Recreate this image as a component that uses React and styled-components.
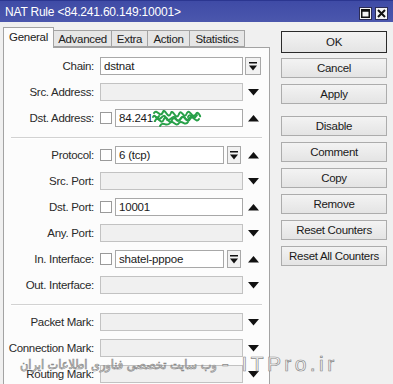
import React from "react";
import styled, { createGlobalStyle, css } from "styled-components";

const GlobalStyle = createGlobalStyle`
  html, body { margin: 0; padding: 0; background: #f0f0f0; }
  body { font-family: "Liberation Sans", Arial, sans-serif; }
  * { box-sizing: border-box; }
`;

const Window = styled.div`
  position: relative;
  width: 393px;
  height: 384px;
  overflow: hidden;
  background: #f0f0f0;
`;

const TitleBar = styled.div`
  height: 22px;
  background: linear-gradient(#3f4ba6, #4b57ad);
  border-top: 1px solid #2b3690;
  display: flex;
  align-items: center;
  justify-content: space-between;
  padding: 0 5px 0 5px;
  color: #fff;
  font-size: 12px;
  letter-spacing: -0.2px;
`;

const TitleButtons = styled.div`
  display: flex;
  gap: 3px;
  margin-top: 4px;
`;

const TitleBtn = styled.div`
  width: 13px;
  height: 13px;
  background: #f4f4f4;
  border: 1px solid #2c2c55;
  display: flex;
  align-items: center;
  justify-content: center;
`;

const Main = styled.div`
  display: flex;
  align-items: flex-start;
`;

const LeftCol = styled.div`
  margin-left: 3px;
  width: 267px;
  display: flex;
  flex-direction: column;
`;

const TabRow = styled.div`
  display: flex;
  align-items: flex-end;
  height: 25px;
  position: relative;
  z-index: 1;
`;

const Tab = styled.div`
  width: ${(p) => p.$w}px;
  height: ${(p) => (p.$active ? 21 : 17)}px;
  margin-bottom: ${(p) => (p.$active ? -1 : 0)}px;
  border: 1px solid #a3a3a3;
  border-bottom: ${(p) => (p.$active ? "none" : "1px solid #a3a3a3")};
  border-left: ${(p) => (p.$first ? "1px solid #a3a3a3" : "none")};
  background: ${(p) => (p.$active ? "#fcfcfc" : "#e6e6e6")};
  font-size: 11.5px;
  letter-spacing: -0.3px;
  color: #222;
  display: flex;
  align-items: center;
  justify-content: center;
  padding-bottom: ${(p) => (p.$active ? 2 : 0)}px;
  ${(p) =>
    p.$active &&
    css`
      border-right: 1px solid #a3a3a3;
    `}
`;

const Panel = styled.div`
  border: 1px solid #a3a3a3;
  border-bottom: none;
  background: #fcfcfc;
  height: 340px;
  padding-top: 9px;
`;

const Group = styled.div`
  display: flex;
  flex-direction: column;
  gap: 8px;
`;

const Separator = styled.div`
  margin: 10px 7px 7px 7px;
  height: 2px;
  border-top: 1px solid #d2d2d2;
  border-bottom: 1px solid #ffffff;
`;

const Row = styled.div`
  display: flex;
  align-items: center;
  height: 18px;
`;

const Label = styled.div`
  width: 90px;
  margin-right: 6px;
  text-align: right;
  font-size: 11.5px;
  letter-spacing: -0.3px;
  color: #2a2a2a;
  white-space: nowrap;
`;

const Field = styled.div`
  width: 143px;
  height: 18px;
  display: flex;
  align-items: center;
`;

const Check = styled.div`
  width: 12px;
  height: 12px;
  border: 1px solid #9a9a9a;
  background: #fff;
  margin-right: 3px;
  flex: none;
`;

const Input = styled.div`
  position: relative;
  flex: 1;
  height: 18px;
  border: 1px solid ${(p) => (p.$disabled ? "#c2c2c2" : "#a8a8a8")};
  background: ${(p) => (p.$disabled ? "#f0f0f0" : "#ffffff")};
  font-size: 11.5px;
  letter-spacing: -0.2px;
  color: #1a1a1a;
  padding-left: 3px;
  display: flex;
  align-items: center;
  white-space: nowrap;
`;

const DropBtn = styled.div`
  width: ${(p) => (p.$inner ? 14 : 16)}px;
  height: 18px;
  margin: ${(p) => (p.$inner ? "0 2px 0 3px" : "0")};
  border: 1px solid #a8a8a8;
  background: #f2f2f2;
  display: flex;
  align-items: center;
  justify-content: center;
  flex: none;
`;

const Trailing = styled.div`
  width: 16px;
  margin-left: 2px;
  height: 18px;
  display: flex;
  align-items: center;
  justify-content: center;
`;

const RightCol = styled.div`
  margin-left: 11px;
  width: 106px;
  padding-top: 9px;
  display: flex;
  flex-direction: column;
`;

const Button = styled.div`
  height: ${(p) => (p.$default ? 22 : 20)}px;
  margin-top: ${(p) => p.$mt || 0}px;
  border: 1px solid ${(p) => (p.$default ? "#2a2a2a" : "#acacac")};
  background: linear-gradient(#f3f3f3, #e4e4e4);
  font-size: 11.5px;
  letter-spacing: -0.3px;
  color: #1a1a1a;
  display: flex;
  align-items: center;
  justify-content: center;
  white-space: nowrap;
`;

const Watermark = styled.div`
  position: absolute;
  left: 20px;
  top: 350px;
  direction: ltr;
  display: flex;
  align-items: baseline;
  white-space: nowrap;
  pointer-events: none;
  color: rgba(255, 255, 255, 0.6);
  -webkit-text-stroke: 0.7px #8a8a8a;
`;

const WmArabic = styled.span`
  font-family: "DejaVu Sans Condensed", "DejaVu Sans", sans-serif;
  font-size: 12.6px;
`;

const WmLatin = styled.span`
  font-family: "Liberation Sans", Arial, sans-serif;
  font-size: 21px;
  letter-spacing: 3.4px;
  margin-left: 5px;
  position: relative;
  top: 2px;
`;

const Scribble = styled.svg`
  position: absolute;
  left: 36px;
  top: -3px;
`;

const DropIcon = () => (
  <svg width="8" height="9" viewBox="0 0 8 9">
    <rect x="0" y="0" width="8" height="1.5" fill="#111" />
    <path d="M0 3.5 H8 L4 8.5 Z" fill="#111" />
  </svg>
);

const Down = () => (
  <svg width="11" height="7" viewBox="0 0 11 7">
    <path d="M0 0 H11 L5.5 6.5 Z" fill="#111" />
  </svg>
);

const Up = () => (
  <svg width="11" height="7" viewBox="0 0 11 7">
    <path d="M0 6.5 H11 L5.5 0 Z" fill="#111" />
  </svg>
);

const GreenScribble = () => (
  <Scribble width="50" height="22" viewBox="0 0 50 22">
    <g fill="none" stroke="#27a048" strokeWidth="2" strokeLinecap="round">
      <path d="M2 6 C5 1 8 12 11 5 C13 0 16 14 19 6 C21 1 24 15 27 7 C30 1 32 14 35 6 C38 1 40 13 44 7 C46 3 49 11 48 9" />
      <path d="M3 14 C6 7 9 20 12 12 C15 6 17 20 20 13 C23 7 26 19 29 11 C32 6 35 18 38 12 C41 7 44 17 47 12" />
      <path d="M5 10 C8 17 11 4 14 11 C17 18 21 5 24 12 C27 18 30 6 33 11 C36 17 39 6 42 10" />
      <path d="M8 19 C11 13 14 21 18 16 C21 12 24 21 27 16 C30 12 33 20 36 15" />
      <path d="M1 10 C3 5 5 16 7 9" />
      <path d="M36 10 C38 4 41 15 45 8" />
    </g>
  </Scribble>
);

const tabs = [
  { name: "General", w: 51, active: true },
  { name: "Advanced", w: 58 },
  { name: "Extra", w: 36 },
  { name: "Action", w: 42 },
  { name: "Statistics", w: 55 },
];

const FormRow = ({ label, value, check, disabled, drop, innerDrop, trail, scribble }) => (
  <Row>
    <Label>{label}</Label>
    <Field>
      {check && <Check />}
      <Input $disabled={disabled}>
        {value}
        {scribble && <GreenScribble />}
      </Input>
      {innerDrop && (
        <DropBtn $inner>
          <DropIcon />
        </DropBtn>
      )}
    </Field>
    <Trailing>
      {drop && (
        <DropBtn>
          <DropIcon />
        </DropBtn>
      )}
      {trail === "down" && <Down />}
      {trail === "up" && <Up />}
    </Trailing>
  </Row>
);

export default function App() {
  return (
    <Window>
      <GlobalStyle />
      <TitleBar>
        <span>NAT Rule &lt;84.241.60.149:10001&gt;</span>
        <TitleButtons>
          <TitleBtn>
            <svg width="9" height="9" viewBox="0 0 9 9">
              <rect x="0.75" y="0.75" width="7.5" height="7.5" fill="none" stroke="#111" strokeWidth="1.5" />
              <rect x="0.75" y="0.75" width="7.5" height="2" fill="#111" />
            </svg>
          </TitleBtn>
          <TitleBtn>
            <svg width="9" height="9" viewBox="0 0 9 9">
              <path d="M1 1 L8 8 M8 1 L1 8" stroke="#111" strokeWidth="2" />
            </svg>
          </TitleBtn>
        </TitleButtons>
      </TitleBar>
      <Main>
        <LeftCol>
          <TabRow>
            {tabs.map((t, i) => (
              <Tab key={t.name} $w={t.w} $active={t.active} $first={i === 0}>
                {t.name}
              </Tab>
            ))}
          </TabRow>
          <Panel>
            <Group>
              <FormRow label="Chain:" value="dstnat" drop />
              <FormRow label="Src. Address:" disabled trail="down" />
              <FormRow label="Dst. Address:" check value="84.241." trail="up" scribble />
            </Group>
            <Separator />
            <Group>
              <FormRow label="Protocol:" check value="6 (tcp)" innerDrop trail="up" />
              <FormRow label="Src. Port:" disabled trail="down" />
              <FormRow label="Dst. Port:" check value="10001" trail="up" />
              <FormRow label="Any. Port:" disabled trail="down" />
              <FormRow label="In. Interface:" check value="shatel-pppoe" innerDrop trail="up" />
              <FormRow label="Out. Interface:" disabled trail="down" />
            </Group>
            <Separator />
            <Group>
              <FormRow label="Packet Mark:" disabled trail="down" />
              <FormRow label="Connection Mark:" disabled trail="down" />
              <FormRow label="Routing Mark:" disabled trail="down" />
            </Group>
          </Panel>
        </LeftCol>
        <RightCol>
          <Button $default>OK</Button>
          <Button $mt={5}>Cancel</Button>
          <Button $mt={6}>Apply</Button>
          <Button $mt={12}>Disable</Button>
          <Button $mt={6}>Comment</Button>
          <Button $mt={6}>Copy</Button>
          <Button $mt={6}>Remove</Button>
          <Button $mt={6}>Reset Counters</Button>
          <Button $mt={6}>Reset All Counters</Button>
        </RightCol>
      </Main>
      <Watermark>
        <WmArabic>وب سایت تخصصی فناوری اطلاعات ایران</WmArabic>
        <WmLatin>- ITPro.ir</WmLatin>
      </Watermark>
    </Window>
  );
}
